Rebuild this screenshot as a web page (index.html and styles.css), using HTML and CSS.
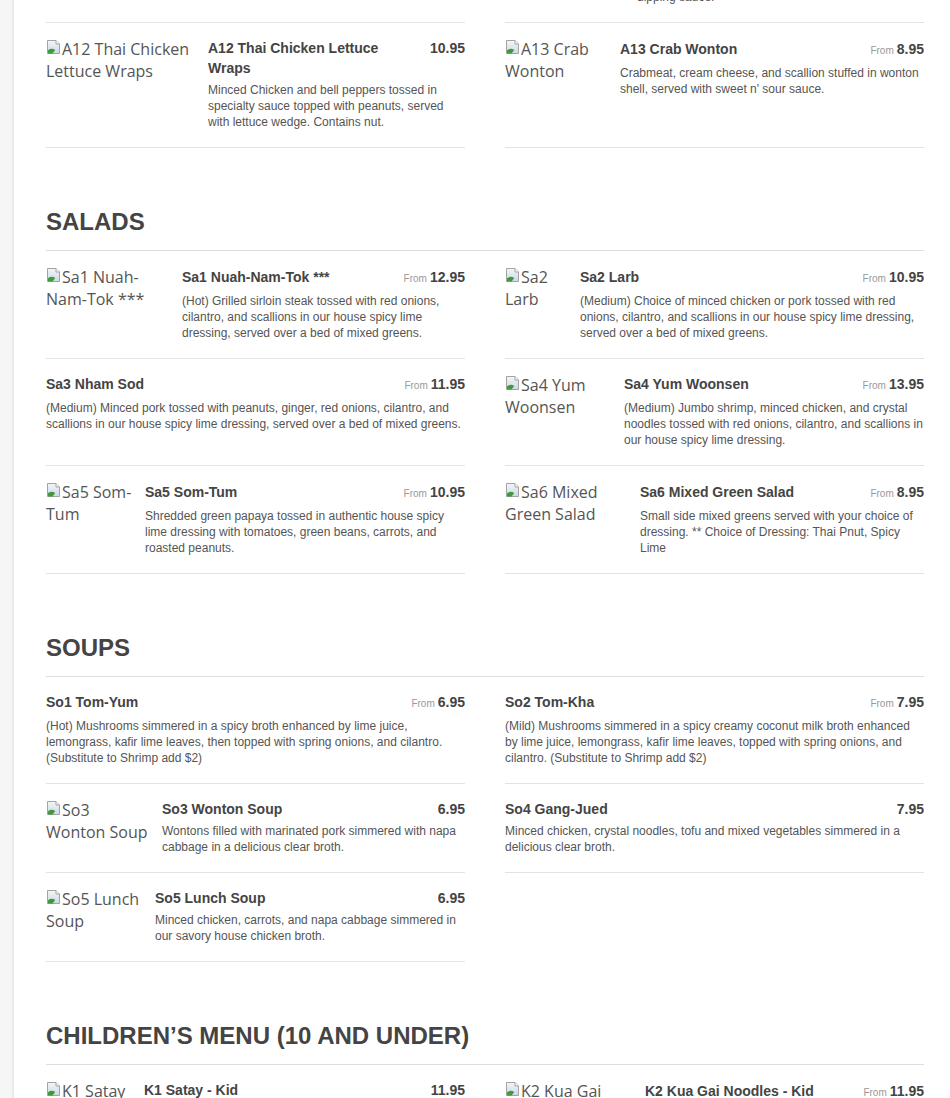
FILE: index.html
```html
<!DOCTYPE html>
<html lang="en">
<head>
<meta charset="utf-8">
<title>Menu</title>
<link rel="stylesheet" href="styles.css">
</head>
<body>
<svg width="0" height="0" class="defs" aria-hidden="true">
  <defs>
    <linearGradient id="sky" x1="0" y1="0" x2="0" y2="1">
      <stop offset="0" stop-color="#f4f6f8"/>
      <stop offset="1" stop-color="#c9d9e6"/>
    </linearGradient>
    <symbol id="broken" viewBox="0 0 16 16">
      <path d="M1.5 1.5h8.5l3.5 3.5v9.5h-12z" fill="url(#sky)" stroke="#a3a3a3"/>
      <path d="M10 1.5v3.5h3.5" fill="#fafafa" stroke="#a3a3a3"/>
      <path d="M2 14.5v-3.2c2.2-1.8 4.8-1.9 7.2-0.3l-2.6 3.5z" fill="#3f9a3a"/>
    </symbol>
  </defs>
</svg>
<div class="sheet">

  <div class="clip">
    <div class="grid">
      <article class="item">
        <div class="item__img" style="width:110px"><svg class="broken"><use href="#broken"/></svg>A10 Fried Tofu</div>
        <div class="item__body">
          <div class="item__head"><h3 class="item__title">A10 Fried Tofu</h3><span class="item__price">8.95</span></div>
          <p class="item__desc">Fried tofu served with sweet chili sauce and crushed peanuts.</p>
        </div>
      </article>
      <article class="item">
        <div class="item__img" style="width:120px"><svg class="broken"><use href="#broken"/></svg>A11 Crispy Rolls</div>
        <div class="item__body">
          <div class="item__head item__head--from"><h3 class="item__title">A11 Crispy Rolls</h3><span class="item__price item__price--from"><span class="item__from">From</span>8.95</span></div>
          <p class="item__desc">Crispy rolls stuffed with glass noodles and vegetables, served<br>with sweet and sour plum sauce as a<br>dipping sauce.</p>
        </div>
      </article>
    </div>
  </div>

  <div class="grid">
    <article class="item">
      <div class="item__img" style="width:150px"><svg class="broken"><use href="#broken"/></svg>A12 Thai Chicken Lettuce Wraps</div>
      <div class="item__body">
        <div class="item__head"><h3 class="item__title">A12 Thai Chicken Lettuce Wraps</h3><span class="item__price">10.95</span></div>
        <p class="item__desc">Minced Chicken and bell peppers tossed in specialty sauce topped with peanuts, served with lettuce wedge. Contains nut.</p>
      </div>
    </article>
    <article class="item">
      <div class="item__img" style="width:103px"><svg class="broken"><use href="#broken"/></svg>A13 Crab Wonton</div>
      <div class="item__body">
        <div class="item__head item__head--from"><h3 class="item__title">A13 Crab Wonton</h3><span class="item__price item__price--from"><span class="item__from">From</span>8.95</span></div>
        <p class="item__desc">Crabmeat, cream cheese, and scallion stuffed in wonton shell, served with sweet n' sour sauce.</p>
      </div>
    </article>
  </div>

  <section class="section">
    <h2 class="section__title">Salads</h2>
    <div class="grid">
      <article class="item">
        <div class="item__img" style="width:124px"><svg class="broken"><use href="#broken"/></svg>Sa1 Nuah-Nam-Tok ***</div>
        <div class="item__body">
          <div class="item__head item__head--from"><h3 class="item__title">Sa1 Nuah-Nam-Tok ***</h3><span class="item__price item__price--from"><span class="item__from">From</span>12.95</span></div>
          <p class="item__desc">(Hot) Grilled sirloin steak tossed with red onions, cilantro, and scallions in our house spicy lime dressing, served over a bed of mixed greens.</p>
        </div>
      </article>
      <article class="item">
        <div class="item__img" style="width:63px"><svg class="broken"><use href="#broken"/></svg>Sa2 Larb</div>
        <div class="item__body">
          <div class="item__head item__head--from"><h3 class="item__title">Sa2 Larb</h3><span class="item__price item__price--from"><span class="item__from">From</span>10.95</span></div>
          <p class="item__desc">(Medium) Choice of minced chicken or pork tossed with red onions, cilantro, and scallions in our house spicy lime dressing, served over a bed of mixed greens.</p>
        </div>
      </article>
      <article class="item">
        <div class="item__body">
          <div class="item__head item__head--from"><h3 class="item__title">Sa3 Nham Sod</h3><span class="item__price item__price--from"><span class="item__from">From</span>11.95</span></div>
          <p class="item__desc">(Medium) Minced pork tossed with peanuts, ginger, red onions, cilantro, and scallions in our house spicy lime dressing, served over a bed of mixed greens.</p>
        </div>
      </article>
      <article class="item">
        <div class="item__img" style="width:107px"><svg class="broken"><use href="#broken"/></svg>Sa4 Yum Woonsen</div>
        <div class="item__body">
          <div class="item__head item__head--from"><h3 class="item__title">Sa4 Yum Woonsen</h3><span class="item__price item__price--from"><span class="item__from">From</span>13.95</span></div>
          <p class="item__desc">(Medium) Jumbo shrimp, minced chicken, and crystal noodles tossed with red onions, cilantro, and scallions in our house spicy lime dressing.</p>
        </div>
      </article>
      <article class="item">
        <div class="item__img" style="width:87px"><svg class="broken"><use href="#broken"/></svg>Sa5 Som-Tum</div>
        <div class="item__body">
          <div class="item__head item__head--from"><h3 class="item__title">Sa5 Som-Tum</h3><span class="item__price item__price--from"><span class="item__from">From</span>10.95</span></div>
          <p class="item__desc">Shredded green papaya tossed in authentic house spicy lime dressing with tomatoes, green beans, carrots, and roasted peanuts.</p>
        </div>
      </article>
      <article class="item">
        <div class="item__img" style="width:123px"><svg class="broken"><use href="#broken"/></svg>Sa6 Mixed Green Salad</div>
        <div class="item__body">
          <div class="item__head item__head--from"><h3 class="item__title">Sa6 Mixed Green Salad</h3><span class="item__price item__price--from"><span class="item__from">From</span>8.95</span></div>
          <p class="item__desc">Small side mixed greens served with your choice of dressing. ** Choice of Dressing: Thai Pnut, Spicy Lime</p>
        </div>
      </article>
    </div>
  </section>

  <section class="section">
    <h2 class="section__title">Soups</h2>
    <div class="grid">
      <article class="item">
        <div class="item__body">
          <div class="item__head item__head--from"><h3 class="item__title">So1 Tom-Yum</h3><span class="item__price item__price--from"><span class="item__from">From</span>6.95</span></div>
          <p class="item__desc">(Hot) Mushrooms simmered in a spicy broth enhanced by lime juice, lemongrass, kafir lime leaves, then topped with spring onions, and cilantro. (Substitute to Shrimp add $2)</p>
        </div>
      </article>
      <article class="item">
        <div class="item__body">
          <div class="item__head item__head--from"><h3 class="item__title">So2 Tom-Kha</h3><span class="item__price item__price--from"><span class="item__from">From</span>7.95</span></div>
          <p class="item__desc">(Mild) Mushrooms simmered in a spicy creamy coconut milk broth enhanced by lime juice, lemongrass, kafir lime leaves, topped with spring onions, and cilantro. (Substitute to Shrimp add $2)</p>
        </div>
      </article>
      <article class="item">
        <div class="item__img" style="width:104px"><svg class="broken"><use href="#broken"/></svg>So3 Wonton Soup</div>
        <div class="item__body">
          <div class="item__head"><h3 class="item__title">So3 Wonton Soup</h3><span class="item__price">6.95</span></div>
          <p class="item__desc">Wontons filled with marinated pork simmered with napa cabbage in a delicious clear broth.</p>
        </div>
      </article>
      <article class="item">
        <div class="item__body">
          <div class="item__head"><h3 class="item__title">So4 Gang-Jued</h3><span class="item__price">7.95</span></div>
          <p class="item__desc">Minced chicken, crystal noodles, tofu and mixed vegetables simmered in a delicious clear broth.</p>
        </div>
      </article>
      <article class="item">
        <div class="item__img" style="width:97px"><svg class="broken"><use href="#broken"/></svg>So5 Lunch Soup</div>
        <div class="item__body">
          <div class="item__head"><h3 class="item__title">So5 Lunch Soup</h3><span class="item__price">6.95</span></div>
          <p class="item__desc">Minced chicken, carrots, and napa cabbage simmered in our savory house chicken broth.</p>
        </div>
      </article>
    </div>
  </section>

  <section class="section">
    <h2 class="section__title">Children’s Menu (10 and under)</h2>
    <div class="grid">
      <article class="item">
        <div class="item__img" style="width:86px"><svg class="broken"><use href="#broken"/></svg>K1 Satay - Kid</div>
        <div class="item__body">
          <div class="item__head"><h3 class="item__title">K1 Satay - Kid</h3><span class="item__price">11.95</span></div>
          <p class="item__desc">Grilled chicken satay served with steamed rice and peanut sauce.</p>
        </div>
      </article>
      <article class="item">
        <div class="item__img" style="width:128px"><svg class="broken"><use href="#broken"/></svg>K2 Kua Gai Noodles - Kid</div>
        <div class="item__body">
          <div class="item__head item__head--from"><h3 class="item__title">K2 Kua Gai Noodles - Kid</h3><span class="item__price item__price--from"><span class="item__from">From</span>11.95</span></div>
          <p class="item__desc">Stir-fried wide rice noodles with chicken, egg and scallions.</p>
        </div>
      </article>
    </div>
  </section>

</div>
</body>
</html>
```

FILE: styles.css
```css
html, body {
  margin: 0;
  padding: 0;
}

body {
  background: #f6f6f6;
  font-family: "Liberation Sans", Arial, sans-serif;
  overflow-x: hidden;
}

.defs {
  position: absolute;
  width: 0;
  height: 0;
  overflow: hidden;
}

.sheet {
  margin-left: 14px;
  width: 936px;
  box-sizing: border-box;
  padding: 0 26px 40px 32px;
  background: #fff;
  box-shadow: -1px 0 3px rgba(0, 0, 0, 0.09);
  min-height: 1200px;
}

.clip {
  height: 23px;
  overflow: hidden;
  display: flex;
  flex-direction: column;
  justify-content: flex-end;
}

.grid {
  display: grid;
  grid-template-columns: 1fr 1fr;
  column-gap: 40px;
}

.section {
  padding-top: 60px;
}

.section__title {
  margin: 0;
  padding-bottom: 14px;
  border-bottom: 1px solid #dedede;
  font: bold 24px/28px "Liberation Sans", Arial, sans-serif;
  color: #444;
  text-transform: uppercase;
}

.item {
  display: flex;
  align-items: flex-start;
  gap: 12px;
  padding: 15px 0 17px;
  border-bottom: 1px solid #e3e3e3;
}

.item__img {
  flex: none;
  font: 16px/22px "Open Sans", sans-serif;
  color: #555;
}

.broken {
  width: 16px;
  height: 16px;
  vertical-align: baseline;
}

.item__body {
  flex: 1;
  min-width: 0;
}

.item__head {
  display: flex;
  align-items: flex-start;
  justify-content: space-between;
  gap: 16px;
}

.item__head--from {
  padding-top: 0.5px;
}

.item__title {
  margin: 0;
  font: bold 14px/20px "Liberation Sans", Arial, sans-serif;
  color: #444;
}

.item__price {
  flex: none;
  display: block;
  height: 20px;
  overflow: hidden;
  white-space: nowrap;
  font: bold 14px/20px "Liberation Sans", Arial, sans-serif;
  color: #444;
}

.item__price--from {
  height: 22px;
  line-height: 20px;
}

.item__from {
  font-size: 10px;
  line-height: 10px;
  font-weight: normal;
  color: #999;
  margin-right: 3px;
}

.item__desc {
  margin: 4px 0 0;
  font: 12px/16px "Liberation Sans", Arial, sans-serif;
  color: #555;
}
```
